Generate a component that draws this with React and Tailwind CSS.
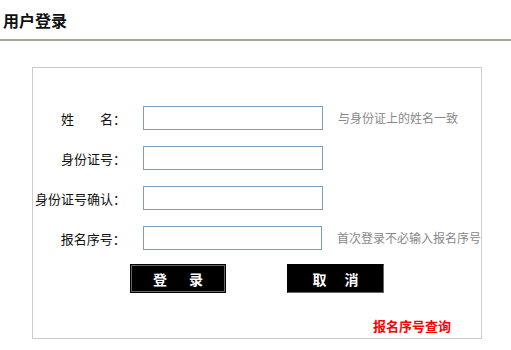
export default function App() {
  const font = { fontFamily: '"Noto Sans CJK SC", "Noto Sans", sans-serif' };
  const rows = [
    { label: "姓\u3000\u3000名：", hint: "与身份证上的姓名一致" },
    { label: "身份证号：", hint: "" },
    { label: "身份证号确认：", hint: "" },
    { label: "报名序号：", hint: "首次登录不必输入报名序号" },
  ];
  return (
    <div className="w-[511px] h-[350px] bg-white overflow-hidden" style={font}>
      <div className="h-[39px] flex items-center pl-[3px] pt-[1px]">
        <span className="text-[16px] font-bold text-[#111] leading-none">用户登录</span>
      </div>
      <div className="h-[2px] bg-[#aaa697]" />
      <div className="pt-[26px] pl-[32px]">
        <div className="w-[450px] h-[272px] border border-[#cccccc] flex flex-col pt-[38px]">
          <div className="flex flex-col gap-[16px]">
            {rows.map((r, i) => (
              <div key={i} className="flex items-center h-[24px]">
                <div className="w-[93px] text-right text-[13px] text-[#111] leading-none whitespace-nowrap">
                  {r.label}
                </div>
                <div className="ml-[17px] w-[180px] h-[24px] border border-[#7f9db9] bg-white" />
                {r.hint && (
                  <div className="ml-[15px] text-[12px] text-[#888] leading-none whitespace-nowrap">
                    {r.hint}
                  </div>
                )}
              </div>
            ))}
          </div>
          <div className="flex mt-[14px] pl-[97px] gap-[61px]">
            <div className="w-[96px] h-[29px] border border-black bg-black">
              <div className="w-full h-full border border-[#666] flex items-center justify-center gap-[22px] text-white font-bold text-[14px] leading-none">
                <span>登</span>
                <span>录</span>
              </div>
            </div>
            <div className="w-[97px] h-[29px] bg-black border-t border-l border-r border-b border-t-black border-l-black border-r-[#666] border-b-[#666] flex items-center justify-center gap-[18px] text-white font-bold text-[14px] leading-none">
              <span>取</span>
              <span>消</span>
            </div>
          </div>
          <div className="mt-[19px] pl-[340px]">
            <span className="text-[13px] font-bold text-[#ff0000] leading-none">报名序号查询</span>
          </div>
        </div>
      </div>
    </div>
  );
}
